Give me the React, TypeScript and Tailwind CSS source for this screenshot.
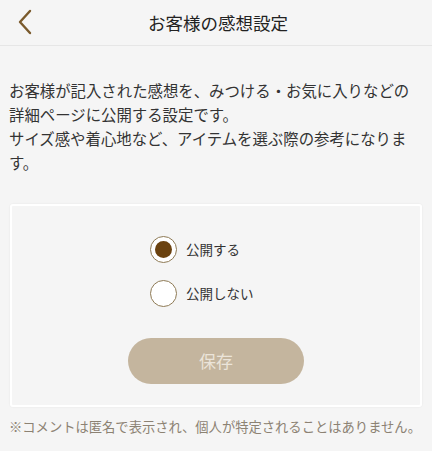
import React from "react";

export default function App() {
  return (
    <div
      className="w-[432px] h-[451px] bg-[#f5f5f5] text-[#333333] overflow-hidden"
      style={{ fontFamily: '"Noto Sans CJK JP", "Noto Sans", sans-serif' }}
    >
      <header className="relative h-[46px] flex items-center justify-center border-b border-[#e6e6e6]">
        <button className="absolute left-[14px] top-[8px] w-[22px] h-[28px] flex items-center justify-center">
          <svg width="16" height="26" viewBox="0 0 16 26" fill="none">
            <path d="M13 2 L3 13 L13 24" stroke="#7a5a2c" strokeWidth="2.4" strokeLinecap="round" strokeLinejoin="round" />
          </svg>
        </button>
        <h1 className="text-[17.5px] font-normal leading-none text-[#222] ml-[4px]">お客様の感想設定</h1>
      </header>
      <p className="px-[9px] pt-[32px] text-[15.4px] leading-[24px] text-[#333]">
        お客様が記入された感想を、みつける・お気に入りなどの詳細ページに公開する設定です。
        <br />
        サイズ感や着心地など、アイテムを選ぶ際の参考になります。
      </p>
      <div className="mx-[10px] mt-[30px] h-[203px] border-2 border-white rounded-[3px] shadow-[0_0_2px_rgba(0,0,0,0.08)] flex flex-col items-center pt-[30px]">
        <div className="flex flex-col gap-[17px] w-[132px]">
          <label className="flex items-center gap-[9px]">
            <span className="w-[27px] h-[27px] rounded-full border border-[#8e7a55] bg-white flex items-center justify-center">
              <span className="w-[17px] h-[17px] rounded-full bg-[#6b4210]" />
            </span>
            <span className="text-[13.5px] text-[#333]">公開する</span>
          </label>
          <label className="flex items-center gap-[9px]">
            <span className="w-[27px] h-[27px] rounded-full border border-[#8e7a55] bg-white" />
            <span className="text-[13.5px] text-[#333]">公開しない</span>
          </label>
        </div>
        <button className="mt-[31px] w-[176px] h-[46px] rounded-full bg-[#c4b59e] text-[#ebe4d9] text-[17px]">
          保存
        </button>
      </div>
      <p className="px-[9px] mt-[10px] text-[13.3px] text-[#8c8273] whitespace-nowrap">
        ※コメントは匿名で表示され、個人が特定されることはありません。
      </p>
    </div>
  );
}
